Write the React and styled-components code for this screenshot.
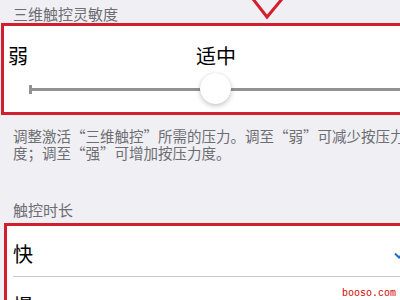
import styled, { createGlobalStyle } from "styled-components";

const GlobalStyle = createGlobalStyle`
  html, body {
    margin: 0;
    padding: 0;
    background: #efeff4;
    overflow: hidden;
  }
  body {
    font-family: "Noto Sans CJK SC", "Noto Sans", sans-serif;
  }
`;

const RED = "#d21f2d";

const Page = styled.div`
  position: relative;
  width: 432px;
  height: 300px;
  padding-top: 5px;
  box-sizing: border-box;
  background: #efeff4;
`;

const Header = styled.div`
  padding: 0 13px;
  margin-top: ${({ gap }) => gap || 0}px;
  height: 18px;
  line-height: 18px;
  font-size: 15px;
  color: #6d6d72;
`;

const Highlight = styled.div`
  margin-top: ${({ gap }) => gap || 0}px;
  margin-left: ${({ left }) => left}px;
  width: ${({ width }) => width}px;
  border: 3px solid ${RED};
  background: #fff;
  box-sizing: border-box;
`;

const Labels = styled.div`
  display: flex;
  justify-content: space-between;
  padding: 18px 4px 0;
  font-size: 20px;
  line-height: 24px;
  color: #000;
`;

const Slider = styled.div`
  position: relative;
  height: 32px;
  margin: 5px 4px 7px;
`;

const Track = styled.div`
  position: absolute;
  left: 22px;
  right: 22px;
  top: 15px;
  height: 3px;
  background: #929292;
`;

const Tick = styled.div`
  position: absolute;
  left: 21px;
  top: 12px;
  width: 3px;
  height: 9px;
  background: #929292;
`;

const Thumb = styled.div`
  position: absolute;
  left: 50%;
  top: 0;
  width: 31px;
  height: 31px;
  margin-left: -16px;
  border-radius: 50%;
  background: #fff;
  box-shadow: 0 2px 5px rgba(0, 0, 0, 0.22), 0 0 1px rgba(0, 0, 0, 0.15);
`;

const Footnote = styled.div`
  padding: 12px 13px 0;
  font-size: 14.5px;
  line-height: 17px;
  color: #6d6d72;
`;

const Row = styled.div`
  padding-left: 6px;
`;

const RowInner = styled.div`
  display: flex;
  align-items: center;
  justify-content: space-between;
  height: 51px;
  padding: 5px 25px 0 0;
  box-sizing: border-box;
  border-bottom: ${({ last }) => (last ? "none" : "1px solid #c8c7cc")};
  font-size: 20px;
  color: #000;
`;

const Arrow = styled.svg`
  position: absolute;
  left: 250px;
  top: -2px;
`;

const Watermark = styled.div`
  position: absolute;
  left: 342px;
  top: 288px;
  font-family: "Liberation Mono", monospace;
  font-size: 10px;
  line-height: 11px;
  color: #d40000;
`;

const Check = () => (
  <svg width="14" height="11" viewBox="0 0 14 11">
    <path d="M1 5.5 L5 9.5 L13 1" fill="none" stroke="#1f6fc6" strokeWidth="2" />
  </svg>
);

const OPTIONS = [
  { label: "快", checked: true },
  { label: "慢", checked: false },
];

export default function App() {
  return (
    <Page>
      <GlobalStyle />
      <Header>三维触控灵敏度</Header>
      <Highlight left={1} width={430}>
        <Labels>
          <span>弱</span>
          <span>适中</span>
          <span>强</span>
        </Labels>
        <Slider>
          <Track />
          <Tick />
          <Thumb />
        </Slider>
      </Highlight>
      <Footnote>
        调整激活“三维触控”所需的压力。调至“弱”可减少按压力度；调至“强”可增加按压力度。
      </Footnote>
      <Header gap={40}>触控时长</Header>
      <Highlight gap={4} left={4} width={432}>
        {OPTIONS.map((o, i) => (
          <Row key={o.label}>
            <RowInner last={i === OPTIONS.length - 1}>
              <span>{o.label}</span>
              {o.checked && <Check />}
            </RowInner>
          </Row>
        ))}
      </Highlight>
      <Arrow width="36" height="24" viewBox="0 0 36 24">
        <polyline points="3,1 17,19 32,1" fill="none" stroke={RED} strokeWidth="3" />
      </Arrow>
      <Watermark>booso.com</Watermark>
    </Page>
  );
}
